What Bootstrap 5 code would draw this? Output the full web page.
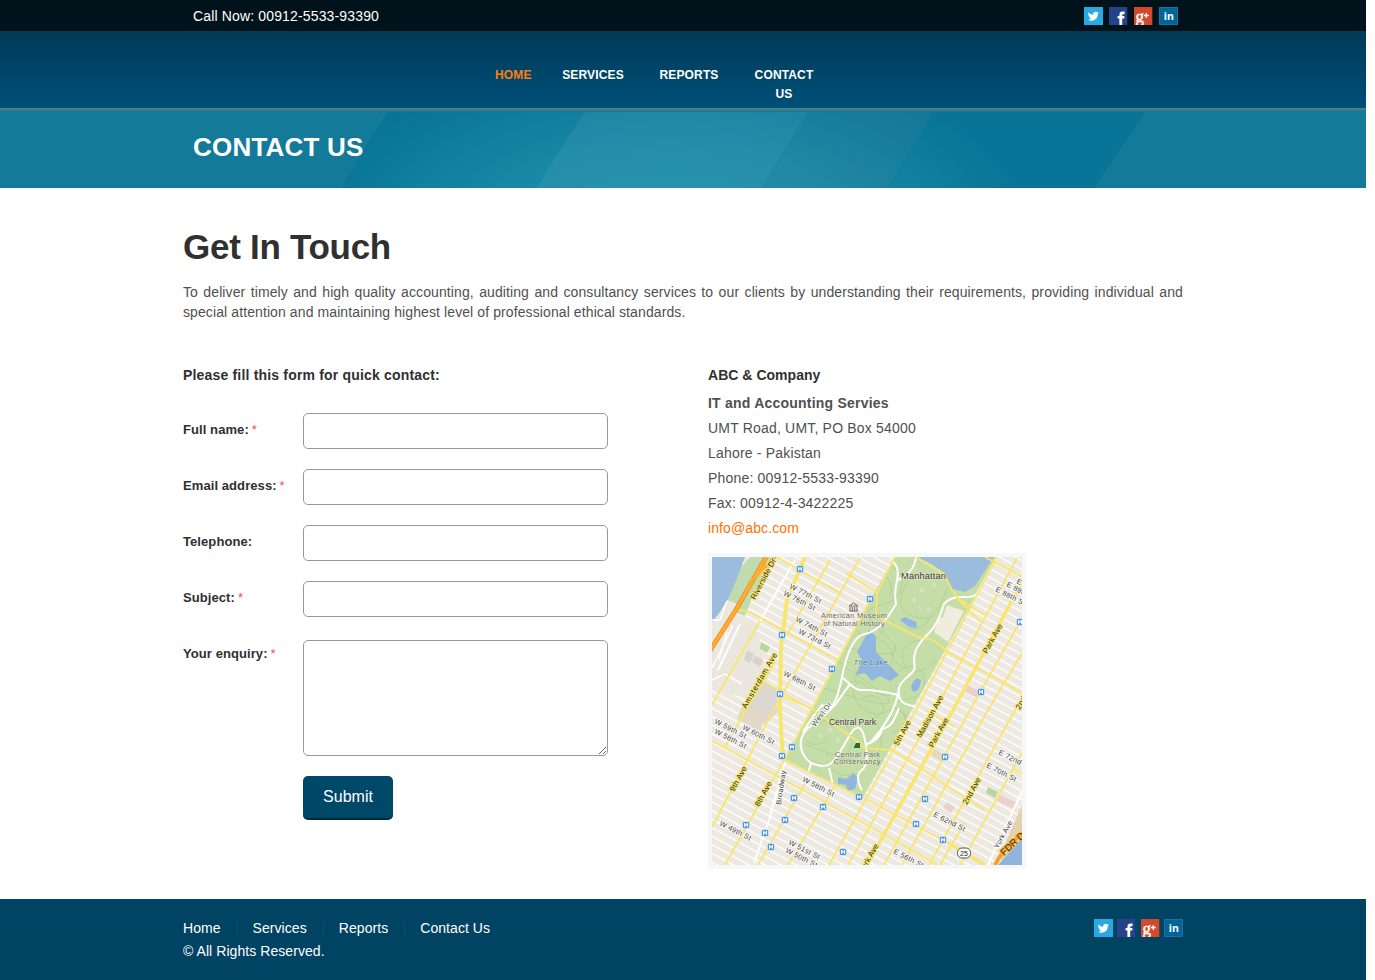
<!DOCTYPE html>
<html lang="en">
<head>
<meta charset="utf-8">
<meta name="viewport" content="width=device-width, initial-scale=1">
<title>Contact Us</title>
<link rel="stylesheet" href="https://cdn.jsdelivr.net/npm/bootstrap@5.3.0/dist/css/bootstrap.min.css">
<style>
body{font-family:"Liberation Sans",Arial,sans-serif;font-size:14px;line-height:20px;color:#505050;background:#fff}
a{text-decoration:none}
.page{width:1366px}
.wrap{width:1000px;margin:0 auto}
.topbar{height:31px;background:#00121a;color:#fff;letter-spacing:.15px}
.topbar .wrap{padding:0 5px 0 10px}
.soc{width:19px;height:18px;display:block}
.mainbar{height:77px;background:linear-gradient(#003a57,#004f78)}
.mainbar .wrap{padding:35px 0 0 312px}
.mainbar a{font-size:12px;font-weight:700;line-height:19px;color:#fff;text-align:center;letter-spacing:.15px}
.mainbar a.active{color:#ff7c11}
.banner{height:80px;position:relative}
.banner svg{position:absolute;left:0;top:0}
.banner h1{position:relative;margin:0;padding:23px 0 0 10px;font-size:26px;line-height:32px;font-weight:700;color:#fff;letter-spacing:.2px}
h2{font-size:35px;line-height:40px;font-weight:700;color:#303030;margin:0;padding-top:39px;letter-spacing:-.28px}
.intro{margin:15px 0 0;text-align:justify;letter-spacing:.1px}
.cols{margin-top:43px}
.formcol{width:525px}
h3{font-size:14px;line-height:20px;font-weight:700;color:#303030;margin:0;letter-spacing:.18px}
.fieldrow{height:36px;margin-bottom:20px}
.fieldrow label{width:120px;font-size:13px;font-weight:700;color:#303030;line-height:18px;padding-top:8px;letter-spacing:.08px}
.fieldrow label span{color:#ef5050;font-weight:400;letter-spacing:0;margin-left:3px}
.form-control{width:305px;height:36px;border:1px solid #999;border-radius:5px;padding:6px}
textarea.form-control{height:116px;min-height:0;margin-top:3px;resize:vertical}
.btn-send{margin-left:120px;width:90px;height:44px;background:#004867;color:#fff;border:0;border-bottom:2px solid #002b3e;border-radius:5px;font-size:16px;padding:0}
.addr p{margin:0;line-height:25px;letter-spacing:.19px}
.addr a{color:#ff7200;letter-spacing:.1px}
.mapbox{width:318px;height:316px;padding:4px;background:#f7f7f7;margin-top:12px}
.mapbox svg{display:block}
footer{height:81px;background:#004362;color:#fff;margin-top:30px}
footer .wrap{padding-top:18px}
footer a{color:#fff}
footer li+li{margin-left:16px;padding-left:16px;background:linear-gradient(#005482,#005482) 0 6px/1px 12px no-repeat}
.foot{line-height:23px;letter-spacing:.06px}
</style>
</head>
<body>
<svg width="0" height="0" class="d-none">
  <symbol id="tw" viewBox="0 0 19 18"><rect width="19" height="18" fill="#2aa9e0"/><path transform="translate(-1 -1.200) scale(1.120)" d="M4.600 5.700c1.200 1.400 2.700 2.200 4.600 2.300-.4-1.700.7-2.700 2-2.700.6 0 1.100.2 1.500.6l1.300-.5-.8 1.200 1.100-.3-1.100 1.100c.1 3.200-2.200 5.900-5.400 5.900-1.300 0-2.400-.3-3.300-.9 1.100.1 2.100-.2 2.900-.8-.9-.1-1.600-.6-1.900-1.400h.9c-1-.3-1.500-1-1.600-1.900l.8.2c-.9-.7-1.200-1.700-.9-2.800z" fill="#fff"/></symbol>
  <symbol id="fb" viewBox="0 0 19 18"><rect width="18.300" height="18" fill="#24438a"/><path d="M10.400 18v-6.500H8.600V9h1.800V7.900c0-2.200 1.200-3.300 3.200-3.300h1.900V7.200h-1.300c-.8 0-1 .4-1 1V9h2.300l-.3 2.500h-2V18z" fill="#fff"/></symbol>
  <symbol id="gp" viewBox="0 0 19 18"><rect width="18.300" height="18" fill="#d3492e"/><text x="1.500" y="14.800" font-family="Liberation Serif,serif" font-size="17" fill="#fff" stroke="#fff" stroke-width=".4">g</text><path d="M12.300 6v5M9.800 8.500h5" stroke="#fff" stroke-width="1.300"/></symbol>
  <symbol id="li" viewBox="0 0 19 18"><rect width="19" height="18" fill="#02659a"/><path d="M.5.5h18v17H.5z" fill="none" stroke="#27749b" stroke-width=".8"/><text x="4.700" y="12.700" font-family="Open Sans,sans-serif" font-size="10.500" font-weight="700" fill="#fff">in</text></symbol>
</svg>
<div class="page">
  <div class="topbar"><div class="wrap h-100 d-flex justify-content-between align-items-center">
    <span>Call Now: 00912-5533-93390</span>
    <div class="d-flex" style="gap:6px;padding-top:1px"><svg class="soc"><use href="#tw"/></svg><svg class="soc"><use href="#fb"/></svg><svg class="soc"><use href="#gp"/></svg><svg class="soc"><use href="#li"/></svg></div>
  </div></div>
  <header class="mainbar"><nav class="wrap d-flex">
    <a class="active" href="#" style="width:36px">HOME</a><a href="#" style="width:62px;margin-left:31px">SERVICES</a><a href="#" style="width:60px;margin-left:35px">REPORTS</a><a href="#" style="width:62px;margin-left:34px">CONTACT US</a>
  </nav></header>
  <section class="banner">
    <svg width="1366" height="80" viewBox="0 108 1366 80">
      <defs>
        <radialGradient id="glow" gradientUnits="userSpaceOnUse" cx="0" cy="0" r="1" gradientTransform="translate(670 230) scale(370 170)"><stop offset="0" stop-color="#1c93ae"/><stop offset=".5" stop-color="#1888a6"/><stop offset="1" stop-color="#087497"/></radialGradient>
        <linearGradient id="edge" x1="0" y1="0" x2="0" y2="1"><stop offset="0" stop-color="#5e8387"/><stop offset=".5" stop-color="#367b8b"/><stop offset="1" stop-color="#167393"/></linearGradient>
      </defs>
      <rect y="108" width="1366" height="80" fill="url(#glow)"/>
      <path d="M0 108H366L316 188H0z" transform="translate(0 0)" fill="#117899"/>
      <path d="M0 108H391L342 188H0z" transform="translate(-1 0)" fill="#137a9a"/>
      <path d="M533 108H810L761 188H484z" transform="translate(0 0)" fill="none"/>
      <path d="M587 108H810L761 188H536z" fill="#5aa5c0" opacity=".2"/>
      <path d="M810 108H936L887 188H761z" fill="#5088a0" opacity=".15"/>
      <path d="M1148 108H1366V188H1094z" fill="#137a9a"/>
      <rect y="108" width="1366" height="4" fill="url(#edge)"/>
    </svg>
    <div class="wrap"><h1>CONTACT US</h1></div>
  </section>
  <main class="wrap">
    <h2>Get In Touch</h2>
    <p class="intro">To deliver timely and high quality accounting, auditing and consultancy services to our clients by understanding their requirements, providing individual and special attention and maintaining highest level of professional ethical standards.</p>
    <div class="cols d-flex">
      <form class="formcol">
        <h3 style="margin-bottom:28px">Please fill this form for quick contact:</h3>
        <div class="fieldrow d-flex"><label for="n">Full name:<span>*</span></label><input id="n" class="form-control"></div>
        <div class="fieldrow d-flex"><label for="e">Email address:<span>*</span></label><input id="e" class="form-control"></div>
        <div class="fieldrow d-flex"><label for="t">Telephone:</label><input id="t" class="form-control"></div>
        <div class="fieldrow d-flex"><label for="s">Subject:<span>*</span></label><input id="s" class="form-control"></div>
        <div class="fieldrow d-flex" style="height:119px"><label for="q">Your enquiry:<span>*</span></label><textarea id="q" class="form-control"></textarea></div>
        <button type="button" class="btn btn-send d-block">Submit</button>
      </form>
      <div class="addr">
        <h3 class="mb-1" style="letter-spacing:.03px">ABC &amp; Company</h3>
        <p class="fw-bold" style="letter-spacing:.22px;padding-top:2px">IT and Accounting Servies</p>
        <p>UMT Road, UMT, PO Box 54000</p>
        <p>Lahore - Pakistan</p>
        <p>Phone: 00912-5533-93390</p>
        <p>Fax: 00912-4-3422225</p>
        <p><a href="#">info@abc.com</a></p>
        <div class="mapbox">
        <svg width="310" height="308" viewBox="712 557 310 308" font-family="Liberation Sans,Arial,sans-serif">
          <defs>
            <pattern id="st" width="44" height="7.500" patternUnits="userSpaceOnUse" patternTransform="translate(712 741) rotate(28.500)"><rect width="44" height="7.500" fill="#ede8e0"/><rect y="0" width="44" height="2.600" fill="#dfdad2"/><rect y=".3" width="44" height="1.900" fill="#fff"/></pattern>
            <clipPath id="pk"><path d="M895 557 869 602 812 709 785 759 862 799 997 557z"/></clipPath>
            <g id="m"><rect x="-3.300" y="-3.300" width="6.600" height="6.600" rx="1.200" fill="#3d8be0" stroke="#d8e9fb" stroke-width=".6"/><path d="M-1.900 2V-2H-.9L0-.3.9-2H1.900V2H.9V0L0 1.300-.9 0V2z" fill="#fff"/></g>
          </defs>
          <rect x="712" y="557" width="310" height="308" fill="url(#st)"/>
          <!-- large blocks -->
          <path d="M733 615 755 621 768 680 757 700 712 690V630z" fill="#ebe6de"/>
          <path d="M758 680 776 688 778 712 766 724 743 712z" fill="#dcd7cf"/><path d="M742 706 766 717 760 731 737 719z" fill="#e3d8c5"/>
          <path d="M761 642 770 647 767 653 760 649zM988 787 998 792 995 798 986 793z" fill="#b8d6a0"/>
          <path d="M747 650 754 654 750 663 744 660zM755 656 763 660 760 667 752 662z" fill="#d8d3ca"/>
          <path d="M968 685 980 691 977 698 965 692zM998 794 1017 803 1014 809 995 800zM947 802 955 807 951 813 943 808z" fill="#ead1ce"/>
          <path d="M934 749 946 756 943 762 931 755z" fill="#e8d8b8"/>
          <!-- river, riverside park -->
          <path d="M750 557H777L752 598 745 616 736 612 712 645V600z" fill="#c0dcae"/>
          <path d="M712 557H745L735 583 722 613 712 629z" fill="#9bbcdd"/>
          <path d="M720 612 727 600 738 604 712 652V622z" fill="#ebe8e1"/>
          <path d="M712 620H720L727 601M712 668 725 642 733 625M719 660 727 632M712 680 725 674 742 684" fill="none" stroke="#fff" stroke-width="1.500"/>
          <!-- minor avenues -->
          <g stroke="#fff" stroke-width="2" fill="none"><path d="M795 560 760 621M740 624 718 670M785 762 769 820 754 863M1022 791 988 865M949 785 965 793"/></g>
          <!-- park -->
          <path d="M895 557 869 602 812 709 785 759 862 799 997 557z" fill="#c5dea8"/>
          <g clip-path="url(#pk)">
            <path d="M884 566q20 0 18 18t-24 22 8 30-28 14 6 30-34 10 4 35-28 20M910 578q-20 30 2 38t28-10 14-30M900 670q20-10 24 8t-20 22 12 20 30-30M815 725q24-14 34 4t-8 30-34-2M860 680q-14 12 0 26t30 4 18 30-30 24M845 660q16 6 10 22M920 640q-24 6-16 24t32-4M870 715q18 20 8 40M825 752q10 14 30 4M880 570q16 14 10 26M905 715q8 12-12 18M840 690q12-16 30-2t24 2" fill="none" stroke="#b2ce99" stroke-width=".9"/>
            <path d="M882 618q6 12-4 20t-22-8M932 615q-8 16-24 14M878 640q14 4 14 18t-10 14M896 645q-8 14 6 22M862 698q14-6 20 4t-8 16M832 770q8 8 22 4M806 742q12 6 22-2" fill="none" stroke="#b2ce99" stroke-width=".9"/>
            <g fill="#d7dfc5"><circle cx="922" cy="590" r="2.200"/><circle cx="934" cy="585" r="2.200"/><circle cx="914" cy="600" r="2.200"/><circle cx="929" cy="609" r="2.200"/><circle cx="920" cy="608" r="2"/><circle cx="830" cy="730" r="2.400"/><circle cx="838" cy="740" r="2.200"/><circle cx="820" cy="736" r="2.200"/></g>
            <path d="M913 557H994L975 586 965 592 952 589 945 573 928 562z" fill="#9bbcdd"/>
            <path d="M900 620 905 617 916 622 917 628 909 627zM869 630 876 636 876 652 887 663 899 675 890 681 880 676 872 681 865 673 856 675 862 660 857 652zM915 680 921 680 918 690 912 691zM838 777 846 779 854 773 858 778 855 789 848 791 846 785 838 784z" fill="#8fb7e0"/>
            <ellipse cx="916" cy="685" rx="4" ry="7" transform="rotate(25 916 685)" fill="#8fb7e0"/>
          </g>
          <path d="M947 605 964 611 948 642 934 632 938 618 943 617z" fill="#f0eddf"/>
          <g fill="none" stroke="#fff" stroke-width="2">
            <path d="M892 561Q900 567 897 580T896 604Q880 632 865 634T842 677T822 705Q810 720 803 732M916 557Q914 573 898 580M997 557 978 592Q975 598 963 597T944 604Q938 625 927 635C907 655 917 664 914 670S895 683 899 695Q900 705 915 706M842 677C858 692 858 690 865 690S885 692 899 695M850 684 835 705Q820 720 808 728C796 740 800 755 811 763Q824 768 830 764T848 738 865 740 862 770 862 790M811 763 808 773M865 745Q880 740 882 729C892 727 894 720 899 708M829 768 833 785M899 690Q895 715 870 743"/>
          </g>
          <!-- avenues and crosstown roads -->
          <g fill="none" stroke="#f8e66b" stroke-width="1.800">
            <path d="M712 705 760 621M877 593 895 557M869 602 812 709 784 760 725 865M860 558 774 709 712 827M830 560 787 635M775 662 745 711 725 747M997 557 917 708 829 865M1017 558 935 710 848 865M1022 653 988 710 902 865M1022 618 970 710 884 865M1022 700 1015 710 929 865M1022 753 960 865M807 780 758 865M835 786 788 865M965 822 940 865"/>
            <path d="M735 609 750 612 837 660M777 557 840 593M846 573 877 593 876 616 920 638Q934 637 946 651L1022 693M916 557 944 574Q952 592 959 599L985 615M712 741 870 827 938 865M784 760 865 799 948 843M780 695 812 709 857 741 865 748 892 750 985 810M756 677 812 710M957 598 981 622M925 710 955 727M985 557 1022 577M1012 768 1022 774"/>
            <path d="M805 557 787 600 781 647 780 710 783 760" stroke-width="3.800"/><path d="M1022 582 953 710 867 865M948 843 985 865" stroke-width="3.500"/>
          </g>
          <path d="M766 557 737 608 708 654" fill="none" stroke="#e78b20" stroke-width="4.600"/><path d="M766 557 737 608 708 654M775 557 750 582" fill="none" stroke="#ffad2e" stroke-width="3.200"/>
          <path d="M1022 805 998 860H1022z" fill="#e4d1ad"/><path d="M1022 838 998 865H1022z" fill="#8fb5db"/><path d="M1024 833Q1004 846 995 865" fill="none" stroke="#f3a321" stroke-width="4"/>
          <g><use href="#m" x="800" y="569"/><use href="#m" x="870" y="599"/><use href="#m" x="782" y="635"/><use href="#m" x="832" y="669"/><use href="#m" x="780" y="694"/><use href="#m" x="981" y="692"/><use href="#m" x="1020" y="622"/><use href="#m" x="792" y="747"/><use href="#m" x="782" y="756"/><use href="#m" x="794" y="798"/><use href="#m" x="823" y="807"/><use href="#m" x="859" y="797"/><use href="#m" x="785" y="820"/><use href="#m" x="746" y="825"/><use href="#m" x="765" y="833"/><use href="#m" x="771" y="847"/><use href="#m" x="843" y="852"/><use href="#m" x="945" y="757"/><use href="#m" x="925" y="799"/><use href="#m" x="916" y="824"/><use href="#m" x="943" y="840"/></g>
          <path d="M849 606h9l-4.500-3zM850 607v4M852.300 607v4M854.700 607v4M857 607v4M849 611h9" stroke="#75675a" stroke-width="1" fill="none"/>
          <path d="M854 747l2-4h4v5h-6z" fill="#28683a"/>
          <!-- street names -->
          <g font-size="7.300" fill="#3c3c3c" stroke="#fff" stroke-width="2" stroke-opacity=".85" paint-order="stroke" stroke-linejoin="round">
            <g letter-spacing=".3">
            <text transform="translate(789 588) rotate(27)">W 77th St</text><text transform="translate(783 595) rotate(27)">W 76th St</text><text transform="translate(795 621) rotate(27)">W 74th St</text><text transform="translate(798 633) rotate(27)">W 73rd St</text><text transform="translate(783 675) rotate(27)">W 68th St</text><text transform="translate(714 723) rotate(27)">W 59th St</text><text transform="translate(714 733) rotate(27)">W 58th St</text><text transform="translate(742 729) rotate(27)">W 60th St</text><text transform="translate(802 781) rotate(27)">W 58th St</text><text transform="translate(719 825) rotate(27)">W 49th St</text><text transform="translate(788 844) rotate(27)">W 51st St</text><text transform="translate(785 852) rotate(27)">W 50th St</text><text transform="translate(998 754) rotate(27)">E 72nd St</text><text transform="translate(986 767) rotate(27)">E 70th St</text><text transform="translate(933 816) rotate(27)">E 62nd St</text><text transform="translate(893 853) rotate(27)">E 56th St</text><text transform="translate(1006 586) rotate(27)">E 89th St</text><text transform="translate(995 591) rotate(27)">E 88th St</text><text transform="translate(1016 583) rotate(27)">E 90th St</text>
            <text transform="translate(781 805) rotate(-82)">Broadway</text><text transform="translate(998 849) rotate(-61)">York Ave</text><text transform="translate(815 727) rotate(-53)">West Dr</text></g>
            <g stroke="#f9eb71" fill="#2d2815" stroke-width="2.400" letter-spacing=".2" font-size="7.800">
            <text transform="translate(755 600) rotate(-62)">Riverside Dr</text><text transform="translate(746 709) rotate(-60)" textLength="63">Amsterdam Ave</text><text transform="translate(734 792) rotate(-61)">9th Ave</text><text transform="translate(759 807) rotate(-61)">8th Ave</text><text transform="translate(898 746) rotate(-61)">5th Ave</text><text transform="translate(921 738) rotate(-61)">Madison Ave</text><text transform="translate(933 748) rotate(-61)">Park Ave</text><text transform="translate(987 654) rotate(-61)">Park Ave</text><text transform="translate(967 805) rotate(-61)">2nd Ave</text><text transform="translate(1020 710) rotate(-61)">2nd Ave</text><text transform="translate(863 874) rotate(-61)">Park Ave</text></g>
            <text transform="translate(1004 856) rotate(-43)" font-size="9.500" fill="#3a2a11" stroke="#f7b43b">FDR Dr</text>
          </g>
          <g text-anchor="middle" stroke="#fff" stroke-opacity=".45" paint-order="stroke">
            <text x="923.500" y="578.500" font-size="9.300" fill="#4b3038" textLength="45">Manhattan</text><text x="852.500" y="725" font-size="8.500" fill="#4b3038" textLength="47">Central Park</text>
            <g fill="#6e665f" font-size="7.400"><text x="854" y="618" textLength="66">American Museum</text><text x="854" y="626" textLength="61">of Natural History</text><text x="857.500" y="756.500" textLength="45">Central Park</text><text x="857" y="764" textLength="47">Conservancy</text></g>
            <text x="870.500" y="664.500" font-size="7.500" font-style="italic" fill="#4c7590" textLength="34">The Lake</text>
          </g>
          <rect x="957.500" y="848" width="13" height="10" rx="4.500" fill="#fff" stroke="#555"/><text x="964" y="856" text-anchor="middle" font-size="7" fill="#222">25</text>
        </svg>
        </div>
      </div>
    </div>
  </main>
  <footer><div class="wrap d-flex justify-content-between">
    <div class="foot"><ul class="list-unstyled d-flex mb-0"><li><a href="#">Home</a></li><li><a href="#">Services</a></li><li><a href="#">Reports</a></li><li><a href="#">Contact Us</a></li></ul>© All Rights Reserved.</div>
    <div class="d-flex" style="gap:4.300px;padding-top:2px"><svg class="soc"><use href="#tw"/></svg><svg class="soc"><use href="#fb"/></svg><svg class="soc"><use href="#gp"/></svg><svg class="soc"><use href="#li"/></svg></div>
  </div></footer>
</div>
<script src="https://cdn.jsdelivr.net/npm/bootstrap@5.3.0/dist/js/bootstrap.bundle.min.js"></script>
</body>
</html>
